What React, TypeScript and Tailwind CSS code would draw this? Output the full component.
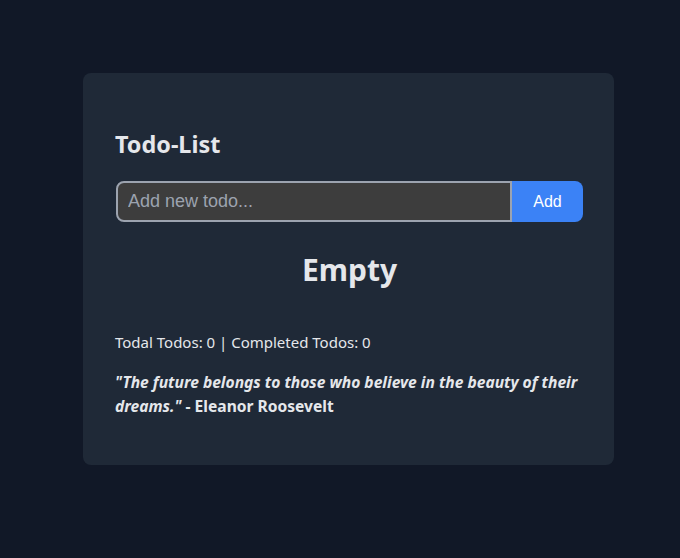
import React from "react";

export default function App() {
  return (
    <div className="min-h-screen w-full bg-[#111827] pl-[83px] pt-[73px]" style={{ fontFamily: '"Noto Sans", sans-serif' }}>
      <div className="w-[531px] h-[392px] rounded-lg bg-[#1f2937] pl-8 pr-[31px] pt-[55px] text-[#e5e7eb]">
        <h1 className="text-[23.4px] font-bold leading-8 text-[#e5e7eb]">Todo-List</h1>
        <div className="ml-px mt-[21px] flex h-[41px]">
          <input
            className="h-full min-w-0 flex-1 rounded-l-lg border-2 border-[#9ca3af] bg-[#3d3d3d] px-[10px] text-[18px] text-white placeholder-[#9ca3af] outline-none"
            style={{ fontFamily: '"Liberation Sans", Arial, sans-serif' }}
            placeholder="Add new todo..."
          />
          <button
            className="h-full w-[71px] rounded-r-lg bg-[#3b82f6] pt-[1px] text-[16px] text-white"
            style={{ fontFamily: '"Liberation Sans", Arial, sans-serif' }}
          >
            Add
          </button>
        </div>
        <h2 className="ml-px mt-[30px] text-center text-[30px] font-bold leading-9">Empty</h2>
        <p className="mt-[42px] text-[15px] leading-6">Todal Todos: 0 | Completed Todos: 0</p>
        <p className="mt-4 text-[15.6px] font-bold leading-6">
          <i>"The future belongs to those who believe in the beauty of their dreams."</i>{" "}- Eleanor Roosevelt
        </p>
      </div>
    </div>
  );
}
